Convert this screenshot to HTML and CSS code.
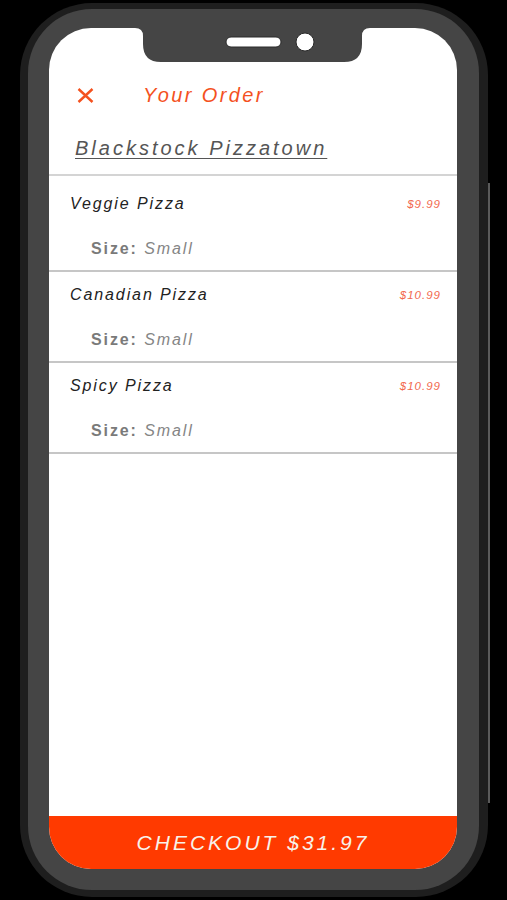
FILE: index.html
```html
<!DOCTYPE html>
<html>
<head>
  <title>Your Order</title>
  <link rel="stylesheet" href="styles.css">
</head>
<body>
  <div class="phone">
    <span class="side-key"></span>
    <div class="bezel">
      <div class="screen">
        <!-- notch -->
        <svg class="notch" width="235" height="35" viewBox="0 0 235 35">
          <path d="M0 0 H235 Q227 0 227 8 V16 Q227 34 209 34 H26 Q8 34 8 16 V8 Q8 0 0 0 Z" fill="#454545"/>
          <rect x="91" y="9" width="55" height="10" rx="5" fill="#fff" stroke="#2a2a2a" stroke-width="1"/>
          <circle cx="170" cy="14" r="9" fill="#fff" stroke="#2a2a2a" stroke-width="1"/>
        </svg>

        <div class="top-bar">
          <svg class="close-icon" width="17" height="15" viewBox="0 0 17 15">
            <path d="M1.5 1 L15.5 14 M15.5 1 L1.5 14" stroke="#f4511e" stroke-width="2.4" stroke-linecap="butt"/>
          </svg>
          <span class="title">Your Order</span>
        </div>

        <div class="shop-name">Blackstock Pizzatown</div>

        <div class="order-list">
          <div class="order-item">
            <div class="item-row">
              <span class="item-name">Veggie Pizza</span>
              <span class="item-price">$9.99</span>
            </div>
            <div class="item-size"><b>Size:</b> <i>Small</i></div>
          </div>
          <div class="order-item">
            <div class="item-row">
              <span class="item-name">Canadian Pizza</span>
              <span class="item-price">$10.99</span>
            </div>
            <div class="item-size"><b>Size:</b> <i>Small</i></div>
          </div>
          <div class="order-item">
            <div class="item-row">
              <span class="item-name">Spicy Pizza</span>
              <span class="item-price">$10.99</span>
            </div>
            <div class="item-size"><b>Size:</b> <i>Small</i></div>
          </div>
        </div>

        <div class="spacer"></div>

        <button class="checkout">CHECKOUT $31.97</button>
      </div>
    </div>
  </div>
</body>
</html>
```

FILE: styles.css
```css
/* page */
body {
  margin: 0;
  background-color: #000;
  font-family: "Liberation Sans", Arial, sans-serif;
}

/* phone frame */
.phone {
  position: relative;
  width: 468px;
  height: 894px;
  margin: 3px 0 0 20px;
  padding: 6px 9px 7px 8px;
  box-sizing: border-box;
  background-color: #1e1e1e;
  border-radius: 72px;
}

.side-key {
  position: absolute;
  right: -2px;
  top: 180px;
  width: 2px;
  height: 620px;
  background-color: #5a5a5a;
}

.bezel {
  height: 100%;
  padding: 19px 22px 21px 21px;
  box-sizing: border-box;
  background-color: #454545;
  border-radius: 64px;
}

.screen {
  position: relative;
  display: flex;
  flex-direction: column;
  height: 100%;
  background-color: #fff;
  border-radius: 42px;
  overflow: hidden;
}

.notch {
  position: absolute;
  top: 0;
  left: 86px;
}

/* header */
.top-bar {
  display: flex;
  align-items: center;
  gap: 49px;
  height: 24px;
  margin-top: 55px;
  padding-left: 28px;
}

.title {
  font-size: 20px;
  font-style: italic;
  letter-spacing: 2.4px;
  color: #f4511e;
}

.shop-name {
  margin: 29px 0 0 26px;
  padding-bottom: 14px;
  line-height: 24px;
  font-size: 20px;
  font-style: italic;
  letter-spacing: 3px;
  color: #555;
  text-decoration: underline;
  text-underline-offset: 3px;
  text-decoration-thickness: 1px;
  border-bottom: 2px solid #d4d4d4;
  margin-left: 0;
  padding-left: 26px;
}

/* items */
.order-list {
  margin-top: 5px;
}

.order-item {
  padding: 13px 16px 11px 21px;
  border-bottom: 2px solid #c6c6c6;
}

.item-row {
  display: flex;
  justify-content: space-between;
  align-items: center;
  height: 20px;
}

.item-name {
  font-size: 16px;
  font-style: italic;
  letter-spacing: 1.9px;
  color: #222;
}

.item-price {
  font-size: 11.5px;
  font-style: italic;
  letter-spacing: 1px;
  color: #f26a4f;
}

.item-size {
  margin: 25px 0 0 21px;
  line-height: 20px;
  font-size: 16px;
  letter-spacing: 1.9px;
  color: #7a7a7a;
}

.item-size i {
  color: #858585;
}

.spacer {
  flex: 1;
}

/* checkout */
.checkout {
  height: 53px;
  border: none;
  background-color: #ff3a00;
  color: #f8f2ea;
  font-family: "Liberation Sans", Arial, sans-serif;
  font-size: 21px;
  font-style: italic;
  letter-spacing: 3px;
  cursor: pointer;
}
```
